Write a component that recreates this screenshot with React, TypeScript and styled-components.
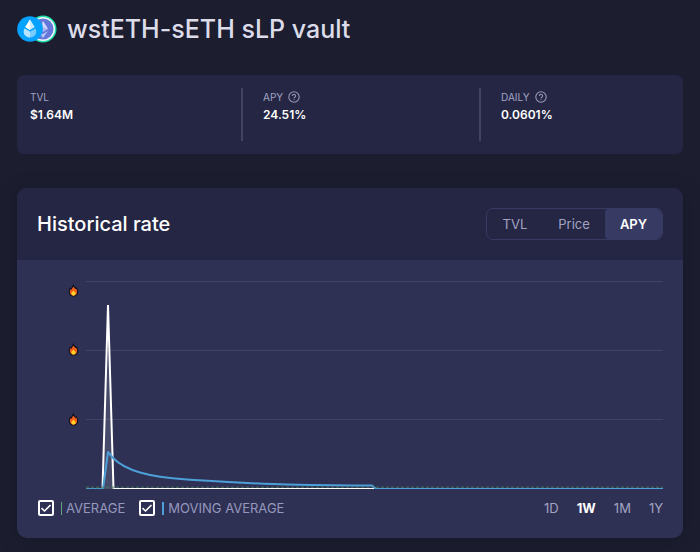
import { useState } from 'react';
import styled, { createGlobalStyle } from 'styled-components';

const GlobalStyle = createGlobalStyle`
  *, *::before, *::after { box-sizing: border-box; }
  body {
    margin: 0;
    background: #1c1e30;
    color: #ffffff;
    font-family: "Inter", "Liberation Sans", sans-serif;
  }
  button, input { font: inherit; margin: 0; }
`;

const Page = styled.main`
  padding: 12px 17px 14px;
`;

const TitleRow = styled.header`
  display: flex;
  align-items: center;
  gap: 10px;
  height: 34px;
  margin-bottom: 29px;
`;

const Title = styled.h1`
  margin: 0;
  font-size: 25px;
  line-height: 34px;
  font-weight: 500;
  color: #dcdcea;
  white-space: nowrap;
`;

const Stats = styled.dl`
  display: grid;
  grid-template-columns: 224fr 238fr 204fr;
  margin: 0 0 34px;
  padding: 13px 0;
  border-radius: 7px;
  background: #242643;
`;

const Stat = styled.div<{ $divided?: boolean }>`
  min-height: 53px;
  padding-left: ${(p) => (p.$divided ? '20px' : '13px')};
  border-left: ${(p) => (p.$divided ? '2px solid #43435f' : '0')};
`;

const StatLabel = styled.dt`
  display: flex;
  align-items: center;
  gap: 5px;
  font-size: 10px;
  line-height: 18px;
  color: #a3a4c3;
`;

const StatValue = styled.dd`
  margin: 0;
  font-size: 12px;
  line-height: 17px;
  font-weight: 600;
`;

const Card = styled.section`
  overflow: hidden;
  border-radius: 10px;
  background: #2e3154;
  box-shadow: 0 2px 16px rgba(18, 20, 32, 0.5);
`;

const CardHeader = styled.div`
  display: flex;
  align-items: center;
  justify-content: space-between;
  height: 72px;
  padding: 0 20px;
  background: #242643;
`;

const CardTitle = styled.h2`
  margin: 0;
  font-size: 20px;
  line-height: 24px;
  font-weight: 500;
`;

const Tabs = styled.div`
  display: flex;
  height: 32px;
  border: 1px solid #373a62;
  border-radius: 7px;
`;

const Tab = styled.button<{ $active: boolean }>`
  padding: 0 16px;
  border: 0;
  border-radius: ${(p) => (p.$active ? '3px 6px 6px 3px' : '6px')};
  background: ${(p) => (p.$active ? '#373b64' : 'transparent')};
  color: ${(p) => (p.$active ? '#ffffff' : '#a3a4c3')};
  font-size: 13px;
  font-weight: ${(p) => (p.$active ? 600 : 400)};
  cursor: pointer;
  & + & { padding: 0 15px; }
`;

const CardBody = styled.div`
  padding: 21px 20px 20px;
`;

const ChartRow = styled.div`
  display: grid;
  grid-template-columns: 49px 1fr;
`;

const Axis = styled.div`
  display: grid;
  grid-template-rows: 18px 100px 40px;
  align-content: start;
  align-items: center;
  justify-items: end;
  padding-right: 7px;
`;

const Plot = styled.svg`
  display: block;
  width: 100%;
  height: 208px;
  overflow: hidden;
  path { vector-effect: non-scaling-stroke; fill: none; }
`;

const CardFooter = styled.div`
  display: flex;
  align-items: center;
  justify-content: space-between;
  margin-top: 9px;
`;

const Legend = styled.div`
  display: flex;
  gap: 13px;
`;

const LegendItem = styled.label`
  display: flex;
  align-items: center;
  gap: 4px;
  height: 20px;
  font-size: 13px;
  line-height: 20px;
  color: #9698bd;
  white-space: nowrap;
  cursor: pointer;
`;

const CheckWrap = styled.span`
  display: grid;
  place-items: center;
  width: 18px;
  height: 20px;
  margin-right: 2px;
  > * { grid-area: 1 / 1; }
`;

const CheckInput = styled.input`
  appearance: none;
  width: 16px;
  height: 16px;
  border: 2px solid #ffffff;
  border-radius: 2px;
  cursor: pointer;
  & + svg { visibility: hidden; pointer-events: none; }
  &:checked + svg { visibility: visible; }
`;

const Swatch = styled.span<{ $color: string; $width: number }>`
  width: ${(p) => p.$width}px;
  height: 13px;
  background: ${(p) => p.$color};
`;

const Ranges = styled.div`
  display: flex;
  gap: 18px;
`;

const RangeButton = styled.button<{ $active: boolean }>`
  padding: 0;
  border: 0;
  background: none;
  font-size: 13px;
  line-height: 20px;
  font-weight: ${(p) => (p.$active ? 700 : 400)};
  color: ${(p) => (p.$active ? '#ffffff' : '#a3a4c3')};
  cursor: pointer;
`;

function PairLogo() {
  return (
    <svg width="40" height="28" viewBox="0 0 40 28" aria-hidden="true">
      <circle cx="26" cy="14" r="13.5" fill="#1fe0a8" />
      <circle cx="26" cy="14" r="12" fill="#f4f5ff" />
      <circle cx="26" cy="14" r="10.5" fill="#6478da" />
      <path d="M26 6l5 8-5 3-5-3z" fill="#aab7f3" />
      <path d="M26 6l5 8-5-2z" fill="#d5dbff" />
      <path d="M21 16l5 3 5-3-5 7z" fill="#b9c4f8" />
      <circle cx="13" cy="14" r="12.8" fill="#05a2ff" />
      <path d="M13 4.5l4.7 7.6-4.7 2.8-4.7-2.8z" fill="#c9ebff" />
      <path d="M13 4.5v10.4l-4.7-2.8z" fill="#ffffff" />
      <path d="M7.6 13.5l5.4 3.2 5.4-3.2c1.6 3 .8 5.5-.7 7.1a6.6 6.6 0 0 1-9.4 0c-1.500-1.600-2.300-4.100-.7-7.100z" fill="#79ceff" />
      <path d="M7.600 13.500l5.400 3.200v5.800a6.600 6.600 0 0 1-4.700-1.900c-1.500-1.600-2.300-4.100-.7-7.100z" fill="#b7e4ff" />
    </svg>
  );
}

function HelpIcon() {
  return (
    <svg width="12" height="12" viewBox="0 0 12 12" fill="none" stroke="#9597b8" aria-hidden="true">
      <circle cx="6" cy="6" r="5.2" strokeWidth="1.100" />
      <path d="M4.400 4.900a1.600 1.600 0 1 1 2.500 1.300c-.6.400-.9.600-.9 1.100" strokeWidth="1.100" />
      <circle cx="6" cy="8.700" r=".3" strokeWidth=".6" />
    </svg>
  );
}

function Flame() {
  return (
    <svg width="11" height="13" viewBox="0 0 10 12" aria-hidden="true">
      <path
        d="M4.800.8c.3 1.600 1.400 2.300 2 3.200.3-.3.4-.5.4-.8C8.500 4.300 8.900 5.700 8.900 7.200A3.900 3.900 0 0 1 5 11.300 3.900 3.900 0 0 1 1.100 7.200c0-1.500.5-2.500 1.200-3.300l.6.8C3.400 3.500 4.600 2.500 4.800.8z"
        fill="#f4601a" stroke="#0d1020" strokeWidth="1" strokeLinejoin="round"
      />
      <path d="M5 6c.4 1.200 2 1.600 2 3A2 2 0 0 1 5 10.700 2 2 0 0 1 3 9C3 7.600 4.500 7.400 5 6z" fill="#ffd426" />
    </svg>
  );
}

function RateChart({ average, moving }: { average: boolean; moving: boolean }) {
  return (
    <Plot viewBox="0 0 577 208" preserveAspectRatio="none" role="img" aria-label="APY history">
      <path d="M0 .5H577M0 69.500H577M0 138.500H577" stroke="#40426a" />
      <path d="M17 208L22 24L28 208Z" style={{ fill: 'rgba(255,255,255,0.12)' }} />
      <path d="M0 208H16.500L22 24L27.500 208H288" stroke="#ffffff" strokeWidth="2" strokeLinejoin="bevel" />
      {moving && (
        <path
          d="M0 208H17L22 171L27 177C34 184 42 188 54 191.500C66 195 80 197 101 198.500C125 200 170 203 201 203.500C225 204 260 204.500 286 204.500L290 208H577"
          stroke="#4d9fd8" strokeWidth="2" strokeLinejoin="round"
        />
      )}
      {average && <path d="M0 206.500H577" stroke="#4a7a5c" strokeWidth="2" strokeDasharray="3 2" opacity=".6" />}
      <path d="M290 207.500H577" stroke="#4d9fd8" strokeWidth="1" />
      <path d="M28 207.500H288" stroke="#ffffff" strokeWidth="1" />
    </Plot>
  );
}

const TABS = ['TVL', 'Price', 'APY'];
const RANGES = ['1D', '1W', '1M', '1Y'];
const STATS = [
  { label: 'TVL', value: '$1.64M', help: false },
  { label: 'APY', value: '24.51%', help: true },
  { label: 'DAILY', value: '0.0601%', help: true },
];

type CheckProps = {
  label: string;
  color: string;
  bar: number;
  checked: boolean;
  onChange: (checked: boolean) => void;
};

function LegendCheck({ label, color, bar, checked, onChange }: CheckProps) {
  return (
    <LegendItem>
      <CheckWrap>
        <CheckInput type="checkbox" checked={checked} onChange={(e) => onChange(e.target.checked)} />
        <svg width="12" height="12" viewBox="0 0 12 12" fill="none" stroke="#ffffff" strokeWidth="1.600">
          <path d="M1.500 6.200l3 2.800L10.500 3" />
        </svg>
      </CheckWrap>
      <Swatch $color={color} $width={bar} />
      {label}
    </LegendItem>
  );
}

export default function App() {
  const [tab, setTab] = useState('APY');
  const [range, setRange] = useState('1W');
  const [average, setAverage] = useState(true);
  const [moving, setMoving] = useState(true);

  return (
    <>
      <GlobalStyle />
      <Page>
        <TitleRow>
          <PairLogo />
          <Title>wstETH-sETH sLP vault</Title>
        </TitleRow>

        <Stats>
          {STATS.map((s, i) => (
            <Stat key={s.label} $divided={i > 0}>
              <StatLabel>
                {s.label}
                {s.help && <HelpIcon />}
              </StatLabel>
              <StatValue>{s.value}</StatValue>
            </Stat>
          ))}
        </Stats>

        <Card>
          <CardHeader>
            <CardTitle>Historical rate</CardTitle>
            <Tabs>
              {TABS.map((t) => (
                <Tab key={t} type="button" aria-pressed={t === tab} $active={t === tab} onClick={() => setTab(t)}>
                  {t}
                </Tab>
              ))}
            </Tabs>
          </CardHeader>
          <CardBody>
            <ChartRow>
              <Axis>
                <Flame />
                <Flame />
                <Flame />
              </Axis>
              <RateChart average={average} moving={moving} />
            </ChartRow>
            <CardFooter>
              <Legend>
                <LegendCheck label="AVERAGE" color="#5fa37a" bar={1} checked={average} onChange={setAverage} />
                <LegendCheck label="MOVING AVERAGE" color="#4d9fd8" bar={2} checked={moving} onChange={setMoving} />
              </Legend>
              <Ranges>
                {RANGES.map((r) => (
                  <RangeButton key={r} type="button" aria-pressed={r === range} $active={r === range} onClick={() => setRange(r)}>
                    {r}
                  </RangeButton>
                ))}
              </Ranges>
            </CardFooter>
          </CardBody>
        </Card>
      </Page>
    </>
  );
}
